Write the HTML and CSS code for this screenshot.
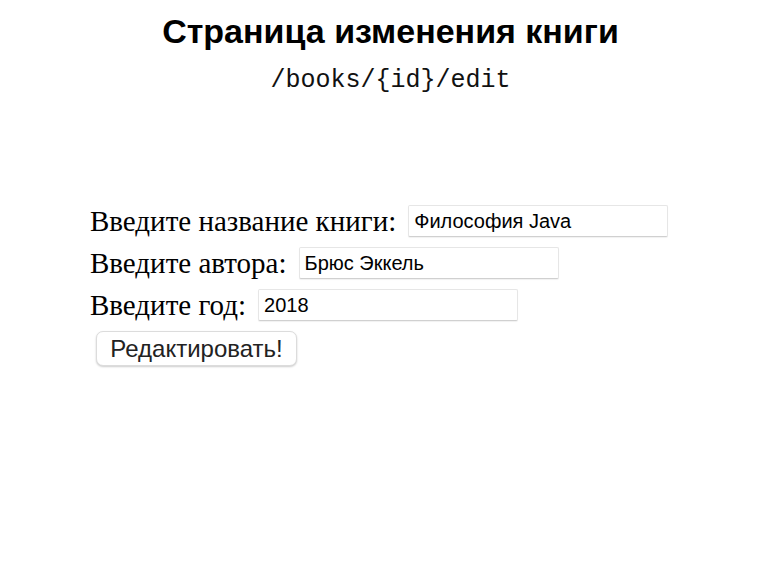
FILE: index.html
```html
<!DOCTYPE html>
<html lang="ru">
<head>
<meta charset="utf-8">
<title>Страница изменения книги</title>
<link rel="stylesheet" href="styles.css">
</head>
<body>
<header class="head">
  <h1 class="title">Страница изменения книги</h1>
  <p class="route">/books/{id}/edit</p>
</header>
<form class="form">
  <div class="row">
    <label class="label" for="t">Введите название книги:</label>
    <input class="field" id="t" type="text" value="Философия Java">
  </div>
  <div class="row">
    <label class="label" for="a">Введите автора:</label>
    <input class="field" id="a" type="text" value="Брюс Эккель">
  </div>
  <div class="row">
    <label class="label" for="y">Введите год:</label>
    <input class="field" id="y" type="text" value="2018">
  </div>
  <div class="row">
    <button class="btn" type="button">Редактировать!</button>
  </div>
</form>
</body>
</html>
```
FILE: styles.css
```css
html, body {
  margin: 0;
  padding: 0;
  background: #fff;
}
body {
  width: 781px;
  height: 581px;
  font-family: "Liberation Serif", "Times New Roman", serif;
  color: #000;
}
.head {
  display: flex;
  flex-direction: column;
  align-items: center;
  padding-top: 11px;
}
.title {
  margin: 0;
  font-family: "Liberation Sans", Arial, sans-serif;
  font-weight: bold;
  font-size: 34px;
  line-height: 40px;
}
.route {
  margin: 15px 0 0;
  font-family: "Liberation Mono", "Courier New", monospace;
  font-size: 25px;
  line-height: 30px;
  color: #111;
}
.form {
  display: flex;
  flex-direction: column;
  padding: 0 0 0 90px;
  margin-top: 104px;
}
.row {
  display: flex;
  align-items: center;
  gap: 12px;
  height: 42px;
}
.label {
  font-size: 29px;
}
.field {
  box-sizing: border-box;
  width: 260px;
  height: 32px;
  margin: 0;
  padding: 0 5px;
  border: 1px solid #e6e6e6;
  border-bottom-color: #d0d0d0;
  border-radius: 2px;
  box-shadow: 0 1px 1px rgba(0,0,0,0.06);
  font-family: "Liberation Sans", Arial, sans-serif;
  font-size: 20px;
  color: #000;
  background: #fff;
  outline: none;
}
.btn {
  margin: 3px 0 0 6px;
  box-sizing: border-box;
  width: 201px;
  height: 35px;
  padding: 0;
  border: 1px solid #dcdcdc;
  border-radius: 7px;
  background: #fff;
  box-shadow: 0 1px 2px rgba(0,0,0,0.2);
  font-family: "Liberation Sans", Arial, sans-serif;
  font-size: 24px;
  color: #222;
}
```
